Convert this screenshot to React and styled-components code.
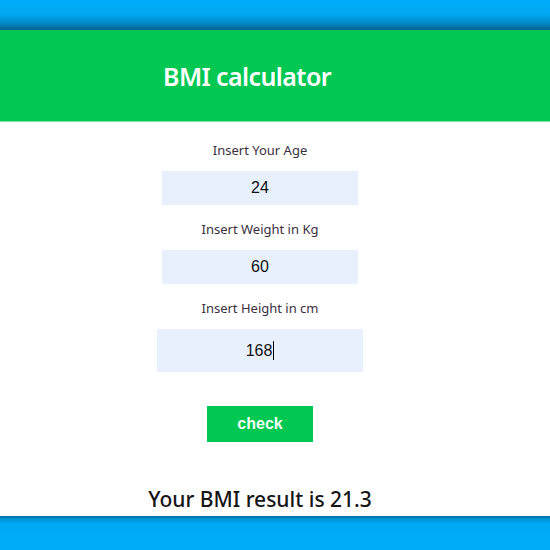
import React from "react";
import styled, { createGlobalStyle } from "styled-components";

const Global = createGlobalStyle`
  html, body { margin: 0; padding: 0; }
  body { background: #ffffff; font-family: "Noto Sans", "Open Sans", sans-serif; overflow: hidden; }
`;

const Page = styled.div`
  width: 550px;
  height: 550px;
  display: flex;
  flex-direction: column;
  overflow: hidden;
`;

const TopBar = styled.div`
  height: 30px;
  flex: none;
  background: linear-gradient(to bottom, #00adfb 0px, #00a8f2 14px, #0386c4 24px, #055f8c 30px);
`;

const Header = styled.header`
  height: 92px;
  flex: none;
  background: #00c853;
  border-bottom: 1px solid #7fe3a8;
  display: flex;
  align-items: center;
  justify-content: center;
  padding-right: 56px;
  box-sizing: border-box;
`;

const Title = styled.h1`
  margin: 0;
  color: #ffffff;
  font-family: "Noto Sans", sans-serif;
  font-weight: 600;
  font-size: 25px;
  letter-spacing: -0.6px;
`;

const Main = styled.main`
  flex: 1;
  display: flex;
  flex-direction: column;
  align-items: center;
  padding: 19px 30px 0 0;
`;

const Label = styled.label`
  font-family: "Noto Sans", sans-serif;
  font-size: 13px;
  color: #3a3040;
  line-height: 18px;
  margin-bottom: 12px;
`;

const Field = styled.div`
  width: ${p => (p.$wide ? 206 : 196)}px;
  height: ${p => (p.$wide ? 43 : 34)}px;
  background: #e8f0fe;
  display: flex;
  align-items: center;
  justify-content: center;
  font-family: "Liberation Sans", Arial, sans-serif;
  font-size: 16px;
  color: #111;
  margin-bottom: 15px;
`;

const Caret = styled.span`
  display: inline-block;
  width: 1px;
  height: 19px;
  background: #000;
  margin-left: 1px;
`;

const Button = styled.button`
  margin-top: 19px;
  width: 106px;
  height: 36px;
  border: none;
  background: #00c853;
  color: #f4fff4;
  font-family: "Liberation Sans", Arial, sans-serif;
  font-weight: 700;
  font-size: 16px;
  padding: 0;
`;

const Result = styled.p`
  margin: 45px 0 0;
  font-family: "Noto Sans", sans-serif;
  font-weight: 500;
  font-size: 21px;
  color: #161616;
  line-height: 24px;
`;

const BottomBar = styled.div`
  height: 34px;
  flex: none;
  background: linear-gradient(to bottom, #04699a 0px, #0195d6 3px, #00a9f6 8px, #00adfb 34px);
`;

export default function App() {
  return (
    <Page>
      <Global />
      <TopBar />
      <Header>
        <Title>BMI calculator</Title>
      </Header>
      <Main>
        <Label>Insert Your Age</Label>
        <Field>24</Field>
        <Label>Insert Weight in Kg</Label>
        <Field>60</Field>
        <Label>Insert Height in cm</Label>
        <Field $wide>
          168<Caret />
        </Field>
        <Button>check</Button>
        <Result>Your BMI result is 21.3</Result>
      </Main>
      <BottomBar />
    </Page>
  );
}
